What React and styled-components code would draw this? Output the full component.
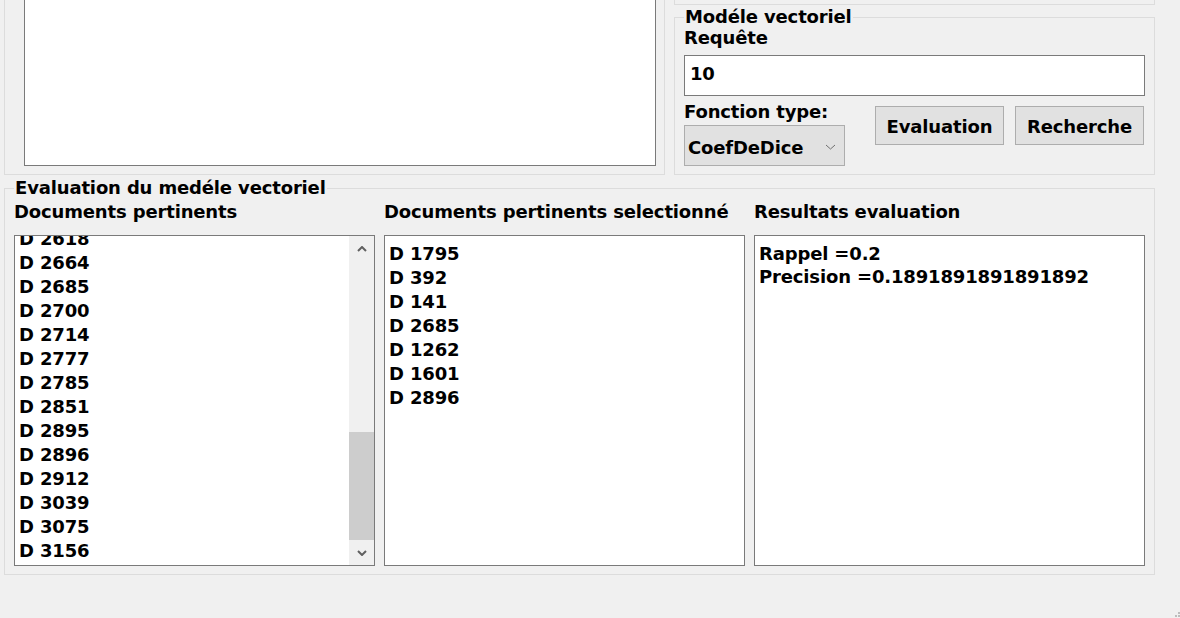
import React, { useEffect, useRef } from 'react';
import styled, { createGlobalStyle } from 'styled-components';

const GlobalStyle = createGlobalStyle`
  html, body {
    margin: 0;
    padding: 0;
    background: #f0f0f0;
  }
  body {
    font-family: "DejaVu Sans", Verdana, sans-serif;
    font-weight: bold;
    font-size: 18px;
    letter-spacing: -0.15px;
    color: #000;
    overflow: hidden;
  }
  * { box-sizing: border-box; }
`;

const pertinents = [
  'D 2618', 'D 2664', 'D 2685', 'D 2700', 'D 2714', 'D 2777', 'D 2785',
  'D 2851', 'D 2895', 'D 2896', 'D 2912', 'D 3039', 'D 3075', 'D 3156',
];
const selectionnes = ['D 1795', 'D 392', 'D 141', 'D 2685', 'D 1262', 'D 1601', 'D 2896'];

const Window = styled.div`
  position: relative;
  width: 1180px;
  height: 618px;
  overflow: hidden;
  padding-left: 4px;
  display: flex;
  flex-direction: column;
`;

const TopRow = styled.div`
  display: flex;
  gap: 9px;
  width: 1151px;
  height: 175px;
`;

const OpenGroup = styled.div`
  width: ${p => p.width};
  height: ${p => p.height || 'auto'};
  display: flex;
  border: 1px solid #dcdcdc;
  border-top: none;
  padding: ${p => p.pad || '0'};
`;

const EditBox = styled.div`
  flex: 1;
  background: #fff;
  border: 1px solid #7a7a7a;
  border-top: none;
`;

const RightColumn = styled.div`
  width: 481px;
  display: flex;
  flex-direction: column;
`;

const Group = styled.fieldset`
  margin: ${p => p.mt || '0'} 0 0 0;
  padding: 0 9px 8px;
  border: 1px solid #dcdcdc;
  min-width: 0;
  min-height: 0;
  flex: 1;
  display: flex;
  flex-direction: column;
`;

const BottomGroup = styled(Group)`
  flex: none;
  width: 1151px;
  height: 398px;
`;

const Legend = styled.legend`
  padding: 0 1px;
  line-height: 22px;
`;

const Label = styled.div`
  line-height: ${p => p.lh || '20px'};
  margin-top: ${p => p.mt || '0'};
  white-space: nowrap;
`;

const TextInput = styled.div`
  margin-top: 7px;
  height: 41px;
  background: #fff;
  border: 1px solid #7a7a7a;
  padding: 7px 5px 0;
  line-height: 22px;
`;

const ControlRow = styled.div`
  display: flex;
  align-items: flex-start;
  margin-top: 6px;
`;

const ComboColumn = styled.div`
  display: flex;
  flex-direction: column;
  width: 161px;
`;

const Combo = styled.div`
  margin-top: 3px;
  height: 41px;
  background: #e1e1e1;
  border: 1px solid #adadad;
  display: flex;
  align-items: center;
  justify-content: space-between;
  padding: 3px 8px 0 3px;
`;

const Buttons = styled.div`
  margin-left: auto;
  margin-right: 1px;
  margin-top: 4px;
  display: flex;
  gap: 11px;
`;

const Button = styled.button`
  width: 129px;
  height: 39px;
  background: #e1e1e1;
  border: 1px solid #adadad;
  font: inherit;
  letter-spacing: inherit;
  color: #000;
  padding: 2px 0 0;
  margin: 0;
`;

const Columns = styled.div`
  flex: 1;
  min-height: 0;
  display: grid;
  grid-template-columns: 361px 361px 391px;
  grid-template-rows: 100%;
  gap: 9px;
`;

const Column = styled.div`
  display: flex;
  flex-direction: column;
  min-height: 0;
`;

const ListBox = styled.div`
  flex: 1;
  min-height: 0;
  margin-top: 12px;
  background: #fff;
  border: 1px solid #7a7a7a;
  display: flex;
  overflow: hidden;
`;

const Items = styled.div`
  flex: 1;
  overflow: hidden;
  padding: ${p => p.pad || '6px 4px 0'};
  line-height: ${p => p.lh || '24px'};
  white-space: nowrap;
`;

const ScrollBar = styled.div`
  width: 25px;
  background: #f0f0f0;
  display: flex;
  flex-direction: column;
`;

const ArrowButton = styled.div`
  height: 25px;
  display: flex;
  align-items: center;
  justify-content: center;
`;

const Track = styled.div`
  flex: 1;
  display: flex;
  flex-direction: column;
  justify-content: flex-end;
`;

const Thumb = styled.div`
  height: 108px;
  background: #cdcdcd;
`;

const SizeGrip = styled.svg`
  position: absolute;
  right: 0;
  bottom: 0;
`;

const Chevron = ({ up, color = '#606060', w = 10, h = 6, sw = 2 }) => (
  <svg width={w} height={h} viewBox={`0 0 ${w} ${h}`}>
    <polyline
      points={up ? `1,${h - 1} ${w / 2},1 ${w - 1},${h - 1}` : `1,1 ${w / 2},${h - 1} ${w - 1},1`}
      fill="none"
      stroke={color}
      strokeWidth={sw}
    />
  </svg>
);

function ScrolledList({ items }) {
  const ref = useRef(null);
  useEffect(() => {
    if (ref.current) ref.current.scrollTop = ref.current.scrollHeight;
  }, []);
  return (
    <ListBox>
      <Items ref={ref} pad="0 4px 2px">
        {items.map(d => <div key={d}>{d}</div>)}
      </Items>
      <ScrollBar>
        <ArrowButton><Chevron up /></ArrowButton>
        <Track><Thumb /></Track>
        <ArrowButton><Chevron /></ArrowButton>
      </ScrollBar>
    </ListBox>
  );
}

export default function App() {
  return (
    <>
      <GlobalStyle />
      <Window>
        <TopRow>
          <OpenGroup width="661px" pad="0 8px 8px 19px">
            <EditBox />
          </OpenGroup>
          <RightColumn>
            <OpenGroup height="5px" />
            <Group mt="1px">
              <Legend>Modéle vectoriel</Legend>
              <Label>Requête</Label>
              <TextInput>10</TextInput>
              <ControlRow>
                <ComboColumn>
                  <Label>Fonction type:</Label>
                  <Combo>
                    <span>CoefDeDice</span>
                    <Chevron color="#6f6f6f" w={11} h={6} sw={1} />
                  </Combo>
                </ComboColumn>
                <Buttons>
                  <Button>Evaluation</Button>
                  <Button>Recherche</Button>
                </Buttons>
              </ControlRow>
            </Group>
          </RightColumn>
        </TopRow>

        <BottomGroup mt="2px">
          <Legend>Evaluation du medéle vectoriel</Legend>
          <Columns>
            <Column>
              <Label lh="22px" mt="2px">Documents pertinents</Label>
              <ScrolledList items={pertinents} />
            </Column>
            <Column>
              <Label lh="22px" mt="2px">Documents pertinents selectionné</Label>
              <ListBox>
                <Items>
                  {selectionnes.map(d => <div key={d}>{d}</div>)}
                </Items>
              </ListBox>
            </Column>
            <Column>
              <Label lh="22px" mt="2px">Resultats evaluation</Label>
              <ListBox>
                <Items lh="23px">
                  <div>Rappel =0.2</div>
                  <div>Precision =0.1891891891891892</div>
                </Items>
              </ListBox>
            </Column>
          </Columns>
        </BottomGroup>

        <SizeGrip width="8" height="8" viewBox="0 0 8 8">
          <rect x="6" y="2" width="2" height="2" fill="#bdbdbd" />
          <rect x="3" y="5" width="2" height="2" fill="#bdbdbd" />
          <rect x="6" y="5" width="2" height="2" fill="#bdbdbd" />
        </SizeGrip>
      </Window>
    </>
  );
}
